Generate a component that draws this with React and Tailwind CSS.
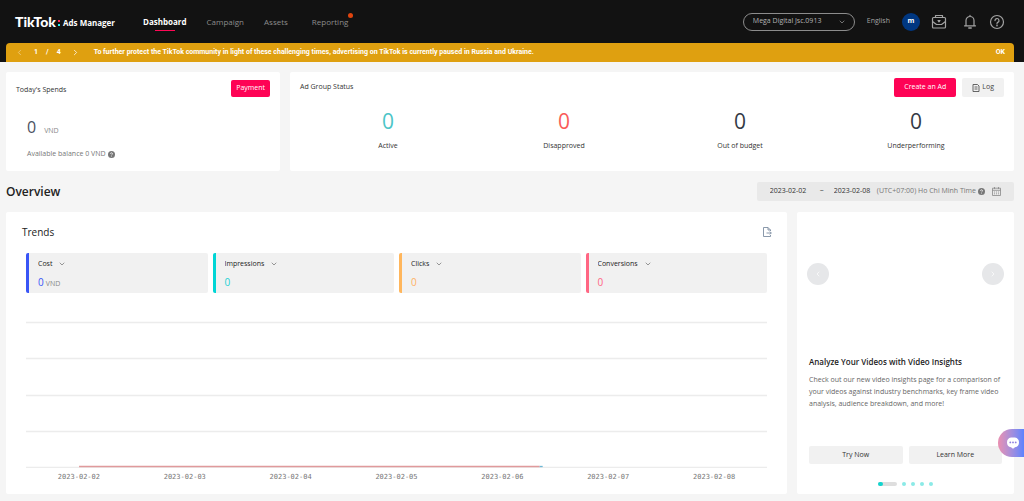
import React from "react";
import { ChevronDown, ChevronLeft, ChevronRight } from "lucide-react";

const navItems = ["Dashboard", "Campaign", "Assets"];

const statuses = [
  { label: "Active", color: "text-[#4cc5c7]" },
  { label: "Disapproved", color: "text-[#fa5c58]" },
  { label: "Out of budget", color: "text-[#333a45]" },
  { label: "Underperforming", color: "text-[#333a45]" },
];

const metrics = [
  { name: "Cost", unit: "VND", border: "border-[#3955f6]", color: "text-[#3955f6]" },
  { name: "Impressions", border: "border-[#00d5d5]", color: "text-[#1cd0d3]" },
  { name: "Clicks", border: "border-[#ffb65c]", color: "text-[#ffb063]" },
  { name: "Conversions", border: "border-[#ff6683]", color: "text-[#ff6683]" },
];

const days = [
  "2023-02-02",
  "2023-02-03",
  "2023-02-04",
  "2023-02-05",
  "2023-02-06",
  "2023-02-07",
  "2023-02-08",
];

const BriefcaseIcon = () => (
  <svg viewBox="0 0 16 16" className="h-4 w-4" fill="none" stroke="currentColor" strokeWidth="1.200" strokeLinejoin="round">
    <rect x="1.500" y="3.500" width="13" height="10.500" rx="1" />
    <path d="M4.500 3.500V1.500H11.500V3.500M5 3.500H11" />
    <path d="M1.500 7.500L5.500 10.500H10.500L14.500 7.500" />
    <path d="M7 6.500L8 7.800L9 6.500Z" fill="currentColor" />
  </svg>
);

const BellIcon = () => (
  <svg viewBox="0 0 16 16" className="h-4 w-4" fill="none" stroke="currentColor" strokeWidth="1.200" strokeLinejoin="round" strokeLinecap="round">
    <path d="M4 11.500V6.500A4 4 0 0 1 12 6.500V11.500M2.500 11.800H13.500M8 1.300V2.300" />
    <path d="M6.800 14H9.200" strokeWidth="1.500" />
  </svg>
);

const HelpIcon = () => (
  <svg viewBox="0 0 16 16" className="h-4 w-4" fill="none" stroke="currentColor" strokeWidth="1.200" strokeLinecap="round">
    <circle cx="8" cy="8" r="6.500" />
    <path d="M6 6.600A2 2 0 1 1 8.700 8.400Q8 8.700 8 9.600" />
    <circle cx="8" cy="11.500" r="0.300" />
  </svg>
);

const HintIcon = () => (
  <svg viewBox="0 0 8 8" className="h-[7px] w-[7px] shrink-0">
    <circle cx="4" cy="4" r="4" fill="#777" />
    <path d="M2.900 3.200A1.100 1.100 0 1 1 4.400 4.200Q4 4.400 4 4.900" fill="none" stroke="#fff" strokeWidth="0.900" />
    <circle cx="4" cy="6.100" r="0.500" fill="#fff" />
  </svg>
);

const LogIcon = () => (
  <svg viewBox="0 0 8 8" className="h-2 w-2" fill="none" stroke="#555" strokeWidth="0.900">
    <path d="M1 0.500H5.500L7 2V7.500H1ZM2.500 3H5.500M2.500 5H5.500" />
  </svg>
);

const CalendarIcon = () => (
  <svg viewBox="0 0 9 9" className="h-[9px] w-[9px]" fill="none" stroke="#888" strokeWidth="0.800">
    <path d="M0.500 1.200H8.500V8.500H0.500ZM0.500 3.300H8.500M2.500 0V2M6.500 0V2" />
    <path d="M2 5H7M2 6.800H7" strokeDasharray="1 1" />
  </svg>
);

const ExportIcon = () => (
  <svg viewBox="0 0 10 10" className="h-[10px] w-[10px]" fill="none" stroke="#7d8da1" strokeWidth="0.900">
    <path d="M8.500 4V3L6 0.500H1.500V9.500H8.500V8M6 0.500V3H8.500M4.500 6H9.300M7.800 4.500L9.300 6L7.800 7.500" />
  </svg>
);

const ChatIcon = () => (
  <svg viewBox="0 0 14 12" className="h-3 w-[14px]">
    <path d="M5 0.500H9A5 5 0 0 1 9 10.300L7 11.800L5 10.300A5 5 0 0 1 5 0.500Z" fill="#fff" />
    <circle cx="4.300" cy="5.400" r="0.900" fill="#8c7fe0" />
    <circle cx="7" cy="5.400" r="0.900" fill="#8c7fe0" />
    <circle cx="9.700" cy="5.400" r="0.900" fill="#8c7fe0" />
  </svg>
);

const Header = () => (
  <header className="bg-[#121212]">
    <div className="flex h-[43px] items-center justify-between pr-[19px] pl-[15px]">
      <div className="flex items-center">
        <div className="flex items-center text-white">
          <span className="font-[Lato,sans-serif] text-[14px] leading-4 font-black">TikTok</span>
          <span className="mt-[2px] mr-[3px] ml-[2px] flex flex-col gap-[2px]">
            <span className="h-[2px] w-[2px] bg-[#fe2c55]" />
            <span className="h-[2px] w-[2px] bg-[#25f4ee]" />
          </span>
          <span className="pt-[2px] text-[8px] leading-3 font-bold">Ads Manager</span>
        </div>
        <nav className="ml-7 flex items-center gap-5 text-[8px] leading-[15px] text-[#8c8c8c]">
          {navItems.map((item, i) => (
            <a key={item} href="#" className={i === 0 ? "relative font-bold text-white" : ""}>
              {item}
              {i === 0 && <span className="absolute inset-x-3 bottom-[-2px] h-px bg-[#fe0855]" />}
            </a>
          ))}
          <a href="#" className="relative ml-1">
            Reporting
            <span className="absolute -top-px right-[-5px] h-[5px] w-[5px] rounded-full bg-[#e0440e]" />
          </a>
        </nav>
      </div>
      <div className="flex items-center text-[#a3a3a3]">
        <div className="relative mr-3">
          <select
            aria-label="Account"
            className="block h-[18px] w-28 appearance-none rounded-full border border-[#8c8c8c] bg-transparent pl-[9px] text-[7px] text-[#b5b5b5]"
          >
            <option>Mega Digital Jsc.0913</option>
          </select>
          <ChevronDown className="pointer-events-none absolute top-[5px] right-[9px] h-2 w-2" />
        </div>
        <button className="text-[7px]">English</button>
        <button className="ml-3 h-[18px] w-[18px] rounded-full bg-[#003781] text-[7px] font-bold text-white">m</button>
        <button aria-label="Business center" className="ml-[11px]"><BriefcaseIcon /></button>
        <button aria-label="Notifications" className="ml-[15px]"><BellIcon /></button>
        <button aria-label="Help" className="ml-[11px]"><HelpIcon /></button>
      </div>
    </div>
    <div className="mr-[10px] ml-[6px] flex h-[19px] items-center rounded-t bg-[#dfa010] px-[9px] font-[Roboto,sans-serif] text-[7px] font-bold text-white">
      <button aria-label="Previous notice" className="text-[#f0cf87]"><ChevronLeft className="h-[9px] w-[9px]" /></button>
      <span className="ml-[10px] flex gap-2"><span>1</span><span>/</span><span>4</span></span>
      <button aria-label="Next notice" className="ml-[10px]"><ChevronRight className="h-[9px] w-[9px]" /></button>
      <p className="ml-[14px]">
        To further protect the TikTok community in light of these challenging times, advertising on TikTok is currently paused in Russia and Ukraine.
      </p>
      <button className="ml-auto">OK</button>
    </div>
  </header>
);

const Spends = () => (
  <section className="w-[274px] shrink-0 rounded-[2px] bg-white px-[10px] py-2">
    <div className="flex items-center justify-between">
      <h2 className="pt-[3px] text-[7px] text-[#333]">Today's Spends</h2>
      <button className="h-[17px] rounded-[2px] bg-[#fe0355] px-[5px] text-[7px] text-white">Payment</button>
    </div>
    <div className="ml-[11px] mt-5 flex items-baseline gap-2">
      <span className="text-[16px] leading-5 text-[#4b5262]">0</span>
      <span className="text-[7px] text-[#888]">VND</span>
    </div>
    <div className="ml-[11px] mt-3 flex items-center gap-[2px] text-[7px] leading-[10px] text-[#777]">
      Available balance 0 VND <HintIcon />
    </div>
  </section>
);

const GroupStatus = () => (
  <section className="flex-1 rounded-[2px] bg-white px-[10px] pt-[6px] pb-5">
    <div className="flex items-center">
      <h2 className="text-[7px] text-[#333]">Ad Group Status</h2>
      <button className="ml-auto h-[19px] rounded-[2px] bg-[#fe0355] px-[10px] text-[7px] text-white">Create an Ad</button>
      <button className="ml-[6px] flex h-[19px] items-center gap-[2px] rounded-[2px] bg-[#f1f1f1] px-[10px] text-[7px] text-[#444]">
        <LogIcon /> Log
      </button>
    </div>
    <div className="mt-3 grid grid-cols-4">
      {statuses.map(({ label, color }) => (
        <div key={label} className="text-center">
          <div className={`text-[21px] leading-6 ${color}`}>0</div>
          <div className="mt-2 text-[7px] leading-[10px] text-[#333]">{label}</div>
        </div>
      ))}
    </div>
  </section>
);

const MetricCard = ({ name, unit, border, color }) => (
  <div className={`h-10 rounded-[2px] border-l-[3px] bg-[#f1f1f1] pt-[6px] pl-[9px] ${border}`}>
    <div className="flex items-center gap-[5px]">
      <select aria-label="Metric" defaultValue={name} className="appearance-none bg-transparent text-[7px] leading-[10px] text-[#222]">
        <option>{name}</option>
      </select>
      <ChevronDown className="pointer-events-none h-2 w-2 text-[#666]" />
    </div>
    <div className="mt-[7px] flex items-baseline gap-[2px]">
      <span className={`text-[10px] leading-3 ${color}`}>0</span>
      {unit && <span className="text-[7px] text-[#888]">{unit}</span>}
    </div>
  </div>
);

const Chart = () => (
  <div>
    <svg viewBox="0 0 740 147" preserveAspectRatio="none" className="block h-[147px] w-full">
      {[1, 37, 74, 110, 146].map((y) => (
        <path key={y} d={`M0 ${y}.500H740`} stroke="#ececec" strokeWidth="1.500" />
      ))}
      <path d="M53 145.500H513" stroke="#e09a9c" strokeWidth="1.300" />
      <path d="M513 145.500H516" stroke="#6fb7d4" strokeWidth="1.300" />
    </svg>
    <div className="mt-1 grid grid-cols-7 text-center font-['DejaVu_Sans_Mono',monospace] text-[7px] leading-[10px] text-[#777]">
      {days.map((day) => (
        <span key={day}>{day}</span>
      ))}
    </div>
  </div>
);

const Trends = () => (
  <section className="flex-1 rounded-[2px] bg-white px-5 pt-[14px] pb-3">
    <div className="-ml-1 flex items-center justify-between">
      <h2 className="text-[10px] leading-3 text-[#222]">Trends</h2>
      <button aria-label="Export" className="-mr-[5px]"><ExportIcon /></button>
    </div>
    <div className="mt-[15px] mb-7 grid grid-cols-4 gap-[5px]">
      {metrics.map((metric) => (
        <MetricCard key={metric.name} {...metric} />
      ))}
    </div>
    <Chart />
  </section>
);

const Insights = () => (
  <section className="flex w-[217px] shrink-0 flex-col rounded-[2px] bg-white px-3 pt-[51px] pb-2">
    <div className="-mx-[2px] flex justify-between text-white">
      <button aria-label="Previous slide" className="flex h-[22px] w-[22px] items-center justify-center rounded-full bg-[#e6e7e9]">
        <ChevronLeft className="h-2 w-2" />
      </button>
      <button aria-label="Next slide" className="flex h-[22px] w-[22px] items-center justify-center rounded-full bg-[#e6e7e9]">
        <ChevronRight className="h-2 w-2" />
      </button>
    </div>
    <h3 className="mt-[71px] text-[8px] leading-3 font-semibold text-[#222]">Analyze Your Videos with Video Insights</h3>
    <p className="mt-[6px] text-[7px] leading-[12px] text-[#666]">
      Check out our new video insights page for a comparison of your videos against industry benchmarks, key frame video analysis, audience breakdown, and more!
    </p>
    <div className="mt-auto grid grid-cols-2 gap-[6px]">
      <button className="h-[18px] rounded-[2px] bg-[#f1f1f1] text-[7px] text-[#333]">Try Now</button>
      <button className="h-[18px] rounded-[2px] bg-[#f1f1f1] text-[7px] text-[#333]">Learn More</button>
    </div>
    <div className="mt-[18px] flex items-center justify-center gap-[5px]">
      <span className="h-1 w-[19px] rounded-full bg-[#dedede]">
        <span className="block h-1 w-[5px] rounded-full bg-[#12d5cf]" />
      </span>
      {[1, 2, 3, 4].map((n) => (
        <span key={n} className="h-1 w-1 rounded-full bg-[#8beae7]" />
      ))}
    </div>
  </section>
);

const App = () => {
  return (
    <div className="min-h-screen bg-[#f5f5f5] font-['Open_Sans',sans-serif]">
      <Header />
      <main className="pt-[10px] pr-[10px] pb-2 pl-[6px]">
        <div className="flex h-[99px] gap-[10px]">
          <Spends />
          <GroupStatus />
        </div>
        <div className="my-[10px] flex h-[21px] items-center justify-between">
          <h1 className="text-[12px] font-semibold text-[#222]">Overview</h1>
          <div className="flex h-[19px] items-center rounded-[2px] bg-[#e9e9e9] px-[13px] text-[7px] text-[#333]">
            <input aria-label="Start date" defaultValue="2023-02-02" className="w-[43px] bg-transparent" />
            <span className="mr-[10px] ml-[7px]">~</span>
            <input aria-label="End date" defaultValue="2023-02-08" className="w-[43px] bg-transparent" />
            <span className="mr-[2px] text-[#777]">(UTC+07:00) Ho Chi Minh Time</span>
            <HintIcon />
            <button aria-label="Open calendar" className="ml-[7px]"><CalendarIcon /></button>
          </div>
        </div>
        <div className="flex gap-[10px]">
          <Trends />
          <Insights />
        </div>
      </main>
      <button
        aria-label="Chat"
        className="fixed right-0 bottom-[44px] flex h-7 w-[26px] items-center justify-center rounded-l-full bg-linear-to-r from-[#ea8fb0] to-[#5b83ff] pl-1"
      >
        <ChatIcon />
      </button>
    </div>
  );
};

export default App;
